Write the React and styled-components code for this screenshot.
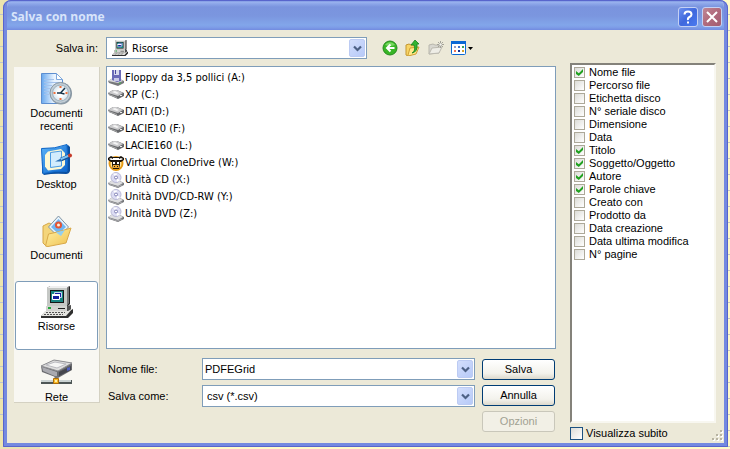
import React, { useState } from 'react';
import styled, { createGlobalStyle, css } from 'styled-components';

const sans = '"Liberation Sans", Arial, sans-serif';
const tahoma = '"DejaVu Sans Condensed", "DejaVu Sans", Tahoma, sans-serif';

const GlobalStyle = createGlobalStyle`
* {
    box-sizing: border-box;
}
body {
    margin: 0;
    color: #000;
    font: 11px/13px ${sans};
    background:
        linear-gradient(#e9e2b4, #e9e2b4) 0 100% / 40px 3px no-repeat,
        repeating-linear-gradient(transparent 0 14px, #c0c4c8 14px 15px, transparent 15px 16px),
        linear-gradient(90deg, #ece4ae 0 12px, #fffac8 12px);
}
button, input, select {
    font: inherit;
    color: inherit;
    margin: 0;
    padding: 0;
}
`;

const Dialog = styled.main`
display: flex;
flex-direction: column;
position: relative;
min-height: calc(100vh - 2px);
margin: 0 2px 2px 3px;
background: #ece9d8;
border: 4px solid #7489e0;
border-top: 0;
border-radius: 8px 8px 0 0;
outline: 1px solid #5865cc;
outline-offset: -1px;
overflow: hidden;
`;

const TitleBar = styled.header`
display: flex;
align-items: center;
gap: 4px;
height: 30px;
margin: 0 -4px;
padding: 3px 6px 0 8px;
background: linear-gradient(#5871d2 0, #9ab3ee 2px, #8ba5e8 4px, #7a94de 7px, #7b96df 16px, #82a6ea 25px, #7f9fe8 27px, #728be0 30px);
`;

const Title = styled.h1`
flex: 1;
margin: 0;
color: #d8e4fa;
font: bold 12px/16px "Open Sans", "Noto Sans", sans-serif;
`;

const CaptionButton = styled.button`
display: grid;
place-items: center;
width: 20px;
height: 20px;
border: 1px solid #c4d0f4;
border-radius: 3px;
background: ${p => p.$close
    ? 'linear-gradient(135deg, #c08795, #b06a7c 50%, #a35c70)'
    : 'linear-gradient(135deg, #6d90ee, #3f68dd 50%, #4a7af0)'};
`;

const Body = styled.div`
display: flex;
flex: 1;
gap: 14px;
padding: 7px 8px 3px 7px;
`;

const Main = styled.div`
display: flex;
flex: 1;
flex-direction: column;
gap: 7px;
min-width: 0;
padding-bottom: 8px;
`;

const Toolbar = styled.div`
display: flex;
align-items: center;
gap: 8px;
`;

const LookInLabel = styled.label`
width: 84px;
text-align: right;
`;

const Tools = styled.div`
display: flex;
align-items: center;
gap: 7px;
width: 181px;
padding-left: 7px;
`;

const ToolButton = styled.button`
display: flex;
align-items: center;
gap: 2px;
height: 16px;
border: 0;
background: none;
`;

const Combo = styled.div`
display: grid;
flex: 1;
grid-template-columns: auto 1fr 18px;
align-items: center;
height: 22px;
padding: 1px;
background: #fff;
border: 1px solid #7f9db9;
font-family: ${p => p.$tahoma ? tahoma : sans};
> svg {
    grid-area: 1 / 1;
    margin-left: 4px;
    pointer-events: none;
    z-index: 1;
}
`;

const field = css`
width: 100%;
height: 18px;
border: 0;
outline: 0;
background: none;
appearance: none;
`;

const Select = styled.select`
${field}
grid-area: 1 / 1 / 2 / 4;
padding-left: ${p => p.$icon ? 24 : 3}px;
`;

const TextInput = styled.input`
${field}
grid-area: 1 / 1 / 2 / 3;
padding-left: 1px;
`;

const Arrow = styled.span`
grid-area: 1 / 3;
display: grid;
place-items: center;
width: 16px;
height: 18px;
justify-self: end;
border-radius: 2px;
border: 1px solid #bccbf3;
background: linear-gradient(135deg, #d3defc, #b7caf8);
pointer-events: none;
`;

const Middle = styled.div`
display: flex;
flex: 1;
align-items: flex-start;
gap: 6px;
`;

const Places = styled.nav`
display: flex;
flex-direction: column;
gap: 2px;
width: 86px;
padding: 1px;
margin-top: 1px;
background: #f8f7f2;
border-right: 1px solid #d4d1c2;
border-bottom: 1px solid #d4d1c2;
`;

const Place = styled.button`
display: flex;
flex-direction: column;
align-items: center;
justify-content: flex-start;
min-height: 69px;
padding: 4px 0 0;
line-height: 13px;
background: ${p => p.$active ? '#fff' : 'none'};
border: 1px solid ${p => p.$active ? '#7f9db9' : 'transparent'};
border-radius: 3px;
&:last-child {
    min-height: 0;
    height: 49px;
}
svg {
    flex: none;
}
span {
    width: 60px;
    margin-top: 2px;
}
`;

const Content = styled.div`
display: flex;
flex: 1;
flex-direction: column;
align-self: stretch;
gap: 9px;
min-width: 0;
`;

const Files = styled.ul`
flex: 1;
margin: 0;
padding: 2px 1px;
list-style: none;
background: #fff;
border: 1px solid #7f9db9;
font-family: ${tahoma};
`;

const FileButton = styled.button`
display: flex;
align-items: center;
gap: 1px;
height: 17px;
border: 0;
background: none;
white-space: nowrap;
`;

const Form = styled.form`
display: flex;
gap: 7px;
`;

const Fields = styled.div`
display: flex;
flex: 1;
flex-direction: column;
gap: 5px;
`;

const FieldRow = styled.div`
display: flex;
align-items: center;
padding-left: 2px;
label {
    width: 94px;
}
`;

const Buttons = styled.div`
display: flex;
flex-direction: column;
gap: 5px;
padding: 1px 1px 0 0;
`;

const PushButton = styled.button`
width: 73px;
height: 21px;
border: 1px solid #003c74;
border-radius: 3px;
background: linear-gradient(#fff, #f3f2ec 70%, #dcd8cc);
&:disabled {
    color: #a1a192;
    border-color: #c9c7ba;
    background: #f2f0e6;
}
`;

const Side = styled.aside`
display: flex;
flex-direction: column;
gap: 4px;
width: 146px;
padding-top: 26px;
`;

const CheckList = styled.div`
flex: 1;
padding: 1px 0 0 2px;
background: #fff;
border: 2px solid;
border-color: #84827a #f8f7f0 #f8f7f0 #84827a;
`;

const CheckRow = styled.label`
display: flex;
align-items: center;
gap: ${p => p.$large ? 3 : 4}px;
height: 13px;
white-space: nowrap;
`;

const CheckBox = styled.input`
appearance: none;
flex: none;
display: grid;
place-items: center;
width: ${p => p.$large ? 13 : 11}px;
height: ${p => p.$large ? 13 : 11}px;
border: 1px solid ${p => p.$large ? '#1c5180' : '#aca899'};
background: linear-gradient(135deg, #dcdcd7, #fff);
&:checked::after {
    content: '';
    width: 7px;
    height: 7px;
    background: #21a121;
    clip-path: polygon(0 28%, 40% 62%, 100% 0, 100% 42%, 40% 100%, 0 70%);
}
`;

const Grip = styled.svg`
position: absolute;
right: 1px;
bottom: 2px;
`;

const Chevron = () => (
  <svg width="9" height="7" viewBox="0 0 9 7"><path d="M1 1.5l3.5 3.5L8 1.5" fill="none" stroke="#4d6185" strokeWidth="2.2" /></svg>
);

const RecentIcon = () => (
  <svg width="32" height="32" viewBox="0 0 32 32">
    <defs>
      <linearGradient id="page"><stop offset="0" stopColor="#68a8ee" /><stop offset=".6" stopColor="#eaf4ff" /></linearGradient>
      <radialGradient id="dial"><stop offset=".4" stopColor="#fff" /><stop offset="1" stopColor="#d2e3ee" /></radialGradient>
    </defs>
    <path d="M.5.5h15l6 6v24H.5z" fill="url(#page)" stroke="#5d8ed0" />
    <path d="M15.5.5v6h6z" fill="#fff" stroke="#7fa8dc" />
    <path d="M3 6.500h10M3 9.500h15M3 12.500h8M3 15.500h6M3 18.500h5M3 21.500h5" stroke="#a3c2ec" />
    <circle cx="20" cy="20.500" r="11" fill="#8a97a2" />
    <circle cx="19.500" cy="20" r="10.500" fill="#c3ced6" stroke="#8797a4" />
    <circle cx="19.500" cy="20" r="8" fill="url(#dial)" stroke="#9fb0bc" />
    <path d="M19.500 13v2M19.500 25v2M12.500 20h2M24.500 20h2" stroke="#f0703c" strokeWidth="2" />
    <path d="M24 15l-4.500 5H16M19.500 20l4 1" fill="none" stroke="#17364c" strokeWidth="1.500" />
  </svg>
);

const DesktopIcon = () => (
  <svg width="32" height="32" viewBox="0 0 32 32">
    <defs><linearGradient id="desk" x2="1" y2="1"><stop offset="0" stopColor="#5cb4f8" /><stop offset="1" stopColor="#0a62cc" /></linearGradient></defs>
    <path d="M1 4q14 2 26-3l2 2v24q-1 3-4 3-12-1-22 1l-2-2z" fill="#0b4fa0" />
    <path d="M.500 4.500Q14 5 26 .500q1 14 0 27Q13 27 2 29.500 1 18 .500 4.500z" fill="url(#desk)" stroke="#1269c9" />
    <path d="M7 7.500l13-2.500 4 4v12l-4 4-13 1.500-3-4V11z" fill="#fdf8d4" />
    <path d="M9.500 8.500l11-1.500v15l-11 1.500z" fill="#d2ecfd" stroke="#4a9be4" />
    <path d="M20 15.500l8-3.500" stroke="#174e8e" strokeWidth="4" />
    <path d="M19 15.500l9-4" stroke="#7cc2f6" strokeWidth="2" />
    <path d="M14 17.500l6-3v3z" fill="#2b6fb4" />
    <circle cx="29" cy="11.500" r="2" fill="#c53928" />
  </svg>
);

const DocumentsIcon = () => (
  <svg width="32" height="32" viewBox="0 0 32 32">
    <defs><linearGradient id="folder" x2="1" y2="1"><stop offset="0" stopColor="#fff2a5" /><stop offset="1" stopColor="#efc04f" /></linearGradient></defs>
    <path d="M2 11l6-3 4 2 12-1v17L5 31 2 28z" fill="#f4d57a" stroke="#d5a748" />
    <path d="M17.500 1l10 11-10 10-10-10z" fill="#e8f3fb" stroke="#8093a3" />
    <path d="M17.500 4l7.500 8-7.500 7-7.500-7z" fill="#6eb6f5" />
    <circle cx="17.500" cy="10" r="3.500" fill="#e25635" />
    <circle cx="17.500" cy="10" r="1.500" fill="#fff0dd" />
    <path d="M4.500 31l3-12 9-2 13.500-4-5 15L7 31.500z" fill="url(#folder)" stroke="#d8a848" />
    <path d="M15 17.500l9-2.500-4 6z" fill="#91cff2" />
  </svg>
);

const ComputerIcon = ({ size = 32 }) => (
  <svg width={size} height={size} viewBox="0 0 32 32">
    <path d="M6 2l3-2h20v18l-3 3H6z" fill="#202020" />
    <path d="M6 2l3-2h20l-3 2z" fill="#f0f0f0" />
    <path d="M6 2h20v18H6z" fill="#c5c8c5" />
    <path d="M26 2l2-2v17l-2 3z" fill="#777" />
    <path d="M9 4h14v13H9z" fill="#161616" />
    <path d="M10 5h12v11H10z" fill="#16837f" />
    <path d="M13.500 6.500h7v5h-7z" fill="#1520a0" stroke="#c8d8f0" />
    <path d="M11.500 8.500h7v5h-7z" fill="#1520a0" stroke="#fff" />
    <path d="M11 9h8" stroke="#fff" strokeWidth="2" />
    <path d="M5 20h21l4-1v6l-4 2H5z" fill="#515151" />
    <path d="M5 20h21v5H5z" fill="#d3d3d0" />
    <path d="M7 22h3" stroke="#24a73b" strokeWidth="2" />
    <path d="M17 22.500h7" stroke="#202020" />
    <path d="M4 26h22l6-3v4l-5 5H0v-2z" fill="#303030" />
    <path d="M4 25h23l5-3-7 8H0z" fill="#e4e4e0" />
    <path d="M5 26.500h19M3 28.500h19" stroke="#555" strokeDasharray="2 1" />
  </svg>
);

const NetworkIcon = () => (
  <svg width="32" height="32" viewBox="0 0 32 32">
    <path d="M0 9l13-6 18 3v7L17 21 1 15z" fill="#696a6e" />
    <path d="M0 9l13-6 18 3-14 8z" fill="#dedede" stroke="#909094" />
    <path d="M5 8l9-3 11 2-9 4z" fill="#f5f5f5" stroke="#babac0" />
    <path d="M1 10l15 5v5L2 14z" fill="#aaaab0" />
    <path d="M18 15l12-6v4l-12 6z" fill="#45464d" />
    <path d="M26 11l3-1v3l-3 1z" fill="#5060c0" />
    <path d="M15 19v5" stroke="#777" strokeWidth="3" />
    <path d="M0 25h31" stroke="#4e5656" strokeWidth="4" />
    <path d="M0 24h30" stroke="#cbd3d3" strokeWidth="2" />
    <path d="M12.500 21.500h5v5h-5z" fill="#f8b928" stroke="#ae6d08" />
    <path d="M14 23h2v2h-2z" fill="#fff0a5" />
  </svg>
);

const DriveIcon = () => (
  <svg width="16" height="16" viewBox="0 0 16 16">
    <path d="M0 6l5-3h4l7 3v3l-6 3-9-4z" fill="#66686b" />
    <path d="M0 6l5-3h4l6 3-5 3z" fill="#c9c9cb" />
    <path d="M4 5l3-1 4 2-2 1z" fill="#f5f5f5" />
    <path d="M1 7l8 3v1L1 8z" fill="#aaa" />
    <path d="M12 8.500h2" stroke="#eee" />
  </svg>
);

const FloppyIcon = () => (
  <svg width="16" height="16" viewBox="0 0 16 16">
    <path d="M0 11l5-3h5l6 3v2l-6 3-9-3z" fill="#77797c" />
    <path d="M0 11l5-3h5l5 3-5 2z" fill="#d8d8da" />
    <path d="M4 0h9v11l-4 1-5-2z" fill="#6a6ab8" />
    <path d="M6 0h5v5H6z" fill="#d6d8ed" />
    <path d="M7 0h1v4H7z" fill="#4646a0" />
    <path d="M6 8h5v3H6z" fill="#c8c9e8" />
    <path d="M11 13h2" stroke="#3fba4f" />
  </svg>
);

const SheepIcon = () => (
  <svg width="16" height="16" viewBox="0 0 16 16">
    <circle cx="8" cy="8.500" r="6.500" fill="#ffe5a0" stroke="#e69a15" strokeWidth="2" />
    <path d="M0 3l3-2 2 1h6l2-1 3 2v2l-3 2H3L0 5z" fill="#161008" />
    <path d="M1 4l2-1 2 1V3h6v1l2-1 2 1-2 1H3z" fill="#fff" />
    <path d="M4 6h8v4l-1 4H5l-1-4z" fill="#241b0d" />
    <path d="M5 7h2v2H5zM9 7h2v2H9z" fill="#fff" />
    <path d="M5 10h6v3H5z" fill="#eda832" />
    <path d="M6 11.500h1M9 11.500h1" stroke="#241b0d" />
  </svg>
);

const DiscIcon = () => (
  <svg width="16" height="16" viewBox="0 0 16 16">
    <path d="M0 11l5-3h5l6 3v2l-6 3-9-3z" fill="#77797c" />
    <path d="M0 11l5-3h5l5 3-5 3z" fill="#dedee0" />
    <circle cx="8" cy="5.500" r="5" fill="#dcdcf3" stroke="#b9b9d6" />
    <path d="M8 5.500L5 1.500h4zM8 5.500l4 3-3 1.500z" fill="#fff" />
    <circle cx="8" cy="5.500" r="1.500" fill="#fff" stroke="#8181b5" />
    <path d="M1 12l8 3 5-2" fill="none" stroke="#a9a9ad" />
  </svg>
);

const BackIcon = () => (
  <svg width="16" height="16" viewBox="0 0 16 16">
    <circle cx="8" cy="8" r="7" fill="#38b526" stroke="#268b20" />
    <path d="M3 5a6 6 0 0 1 10 0q-5 2-10 0" fill="#77d860" />
    <path d="M12.500 8H5M8.500 4.500L5 8l3.500 3.500" fill="none" stroke="#fff" strokeWidth="2" />
  </svg>
);

const UpIcon = () => (
  <svg width="16" height="16" viewBox="0 0 16 16">
    <path d="M1 5l3-1 2 1h5v8l-8 3-2-1z" fill="#f8d566" stroke="#c39630" />
    <path d="M3 15l2-7 9-1-3 7-8 2z" fill="#ffe98a" stroke="#d0a035" />
    <path d="M7 13q4-2 2-8H6l4-5 4 4h-2q1 8-5 9z" fill="#32b432" stroke="#16831d" strokeWidth=".8" />
  </svg>
);

const NewFolderIcon = () => (
  <svg width="16" height="16" viewBox="0 0 16 16">
    <path d="M1 14V5l4-1 2 1h4v8z" fill="#d8d7d0" stroke="#b8b6ac" />
    <path d="M1 14l3-6 10-1-3 6z" fill="#eeede6" stroke="#bcbab0" />
    <path d="M12.500 1v7M9 4.500h7M10 2l5 5M15 2l-5 5" stroke="#a3a299" />
    <circle cx="12.500" cy="4.500" r="1.200" fill="#f5f5f0" />
  </svg>
);

const ViewsIcon = () => (
  <>
    <svg width="15" height="14" viewBox="0 0 15 14">
      <rect x=".5" y=".5" width="14" height="13" rx="1" fill="#fff" stroke="#0a68d4" />
      <path d="M0 1.500h15" stroke="#0a68d4" strokeWidth="3" />
      <path d="M3 5h2v2H3z" fill="#9c9cba" /><path d="M7 5h2v2H7z" fill="#3f73cf" /><path d="M11 5h2v2h-2z" fill="#38a05a" />
      <path d="M3 9h2v2H3z" fill="#f07554" /><path d="M7 9h2v2H7z" fill="#152f91" /><path d="M11 9h2v2h-2z" fill="#d8a32b" />
    </svg>
    <svg width="5" height="3" viewBox="0 0 5 3"><path d="M0 0h5L2.500 3z" /></svg>
  </>
);

const places = [
  { name: 'Documenti recenti', Icon: RecentIcon },
  { name: 'Desktop', Icon: DesktopIcon },
  { name: 'Documenti', Icon: DocumentsIcon },
  { name: 'Risorse', Icon: ComputerIcon },
  { name: 'Rete', Icon: NetworkIcon },
];

const drives = [
  { name: 'Floppy da 3,5 pollici (A:)', Icon: FloppyIcon },
  { name: 'XP (C:)', Icon: DriveIcon },
  { name: 'DATI (D:)', Icon: DriveIcon },
  { name: 'LACIE10 (F:)', Icon: DriveIcon },
  { name: 'LACIE160 (L:)', Icon: DriveIcon },
  { name: 'Virtual CloneDrive (W:)', Icon: SheepIcon },
  { name: 'Unità CD (X:)', Icon: DiscIcon },
  { name: 'Unità DVD/CD-RW (Y:)', Icon: DiscIcon },
  { name: 'Unità DVD (Z:)', Icon: DiscIcon },
];

const columns = [
  'Nome file', 'Percorso file', 'Etichetta disco', 'N° seriale disco', 'Dimensione',
  'Data', 'Titolo', 'Soggetto/Oggetto', 'Autore', 'Parole chiave', 'Creato con',
  'Prodotto da', 'Data creazione', 'Data ultima modifica', 'N° pagine',
];
const exported = ['Nome file', 'Titolo', 'Soggetto/Oggetto', 'Autore', 'Parole chiave'];

function App() {
  const [place, setPlace] = useState('Risorse');
  const [fileName, setFileName] = useState('PDFEGrid');

  return (
    <>
      <GlobalStyle />
      <Dialog>
        <TitleBar>
          <Title>Salva con nome</Title>
          <CaptionButton type="button" aria-label="Guida">
            <svg width="12" height="14" viewBox="0 0 12 14">
              <path d="M2.500 4.500Q2.500 1.500 6 1.500t3.500 3Q9.500 6 7.500 7T6 10" fill="none" stroke="#fff" strokeWidth="2" />
              <path d="M5 11.500h2v2H5z" fill="#fff" />
            </svg>
          </CaptionButton>
          <CaptionButton type="button" $close aria-label="Chiudi">
            <svg width="12" height="12" viewBox="0 0 12 12"><path d="M1 1l10 10M11 1L1 11" stroke="#fff" strokeWidth="2" /></svg>
          </CaptionButton>
        </TitleBar>
        <Body>
          <Main>
            <Toolbar>
              <LookInLabel htmlFor="lookin">Salva in:</LookInLabel>
              <Combo $tahoma>
                <ComputerIcon size={16} />
                <Select id="lookin" $icon><option>Risorse</option></Select>
                <Arrow><Chevron /></Arrow>
              </Combo>
              <Tools>
                <ToolButton type="button" aria-label="Indietro"><BackIcon /></ToolButton>
                <ToolButton type="button" aria-label="Livello superiore"><UpIcon /></ToolButton>
                <ToolButton type="button" aria-label="Nuova cartella" disabled><NewFolderIcon /></ToolButton>
                <ToolButton type="button" aria-label="Visualizza"><ViewsIcon /></ToolButton>
              </Tools>
            </Toolbar>
            <Middle>
              <Places>
                {places.map(({ name, Icon }) => (
                  <Place key={name} type="button" $active={name === place} onClick={() => setPlace(name)}>
                    <Icon />
                    <span>{name}</span>
                  </Place>
                ))}
              </Places>
              <Content>
                <Files>
                  {drives.map(({ name, Icon }) => (
                    <li key={name}><FileButton type="button"><Icon />{name}</FileButton></li>
                  ))}
                </Files>
                <Form onSubmit={e => e.preventDefault()}>
                  <Fields>
                    <FieldRow>
                      <label htmlFor="filename">Nome file:</label>
                      <Combo>
                        <TextInput id="filename" value={fileName} onChange={e => setFileName(e.target.value)} />
                        <Arrow><Chevron /></Arrow>
                      </Combo>
                    </FieldRow>
                    <FieldRow>
                      <label htmlFor="filetype">Salva come:</label>
                      <Combo>
                        <Select id="filetype"><option>csv (*.csv)</option></Select>
                        <Arrow><Chevron /></Arrow>
                      </Combo>
                    </FieldRow>
                  </Fields>
                  <Buttons>
                    <PushButton type="submit">Salva</PushButton>
                    <PushButton type="button">Annulla</PushButton>
                    <PushButton type="button" disabled>Opzioni</PushButton>
                  </Buttons>
                </Form>
              </Content>
            </Middle>
          </Main>
          <Side>
            <CheckList>
              {columns.map(name => (
                <CheckRow key={name}>
                  <CheckBox type="checkbox" defaultChecked={exported.includes(name)} />
                  {name}
                </CheckRow>
              ))}
            </CheckList>
            <CheckRow $large>
              <CheckBox type="checkbox" $large />
              Visualizza subito
            </CheckRow>
          </Side>
        </Body>
        <Grip width="11" height="11" viewBox="0 0 11 11">
          <path d="M9 1h2v2H9zM5 5h2v2H5zM9 5h2v2H9zM1 9h2v2H1zM5 9h2v2H5zM9 9h2v2H9z" fill="#fff" />
          <path d="M8 0h2v2H8zM4 4h2v2H4zM8 4h2v2H8zM0 8h2v2H0zM4 8h2v2H4zM8 8h2v2H8z" fill="#b8b4a2" />
        </Grip>
      </Dialog>
    </>
  );
}

export default App;
